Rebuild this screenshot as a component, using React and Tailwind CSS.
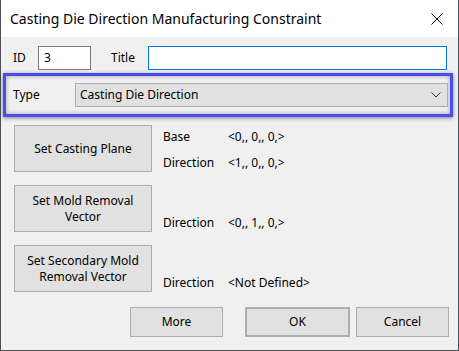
import React from 'react';

const font = { fontFamily: '"Noto Sans", "Open Sans", sans-serif' };

const WinButton = ({ className = '', children }) => (
    <button
        className={`flex items-center justify-center text-center bg-[#e1e1e1] border border-[#adadad] text-[12px] leading-[16px] text-black ${className}`}
    >
        {children}
    </button>
);

const ActionGroup = ({ label, rows }) => (
    <div className="flex h-[47px]">
        <WinButton className="w-[138px] h-[47px] shrink-0">{label}</WinButton>
        <div className="ml-[11px] pt-[4px] flex flex-col gap-[10px] text-[12px] leading-[16px]">
            {rows.map(([name, value], i) => (
                <div key={i} className="flex h-[16px]">
                    <span className="w-[65px]">{name}</span>
                    <span>{value}</span>
                </div>
            ))}
        </div>
    </div>
);

export default function App() {
    return (
        <div
            className="w-[459px] h-[351px] bg-[#f0f0f0] border-x border-b border-[#4b5058] flex flex-col text-black"
            style={font}
        >
            {/* Title bar */}
            <div className="h-[37px] bg-white flex items-center justify-between pl-[9px] pr-[15px] shrink-0">
                <span className="text-[14px] leading-[20px] text-black">
                    Casting Die Direction Manufacturing Constraint
                </span>
                <svg width="12" height="12" viewBox="0 0 12 12" className="block">
                    <path d="M0.5 0.5 L11.5 11.5 M11.5 0.5 L0.5 11.5" stroke="#000" strokeWidth="1" />
                </svg>
            </div>

            {/* ID / Title row */}
            <div className="flex items-center h-[24px] mt-[9px] pl-[12px] pr-[11px] text-[12px]">
                <span className="w-[25px]">ID</span>
                <div className="w-[53px] h-[24px] bg-white border border-[#7a7a7a] px-[5px] flex items-center">
                    3
                </div>
                <span className="ml-[20px] w-[37px]">Title</span>
                <div className="flex-1 h-[24px] bg-white border border-[#0078d7]" />
            </div>

            {/* Type row (highlighted) */}
            <div className="mt-[3px] ml-[2px] w-[450px] h-[44px] border-[3px] border-[#4a4df2] shadow-[0_1px_4px_rgba(0,0,0,0.45),inset_0_0_4px_rgba(0,0,0,0.35)] flex items-center pl-[7px] pr-[2px] text-[12px]">
                <span className="w-[62px]">Type</span>
                <div className="flex-1 h-[24px] bg-[#e1e1e1] border border-[#adadad] flex items-center justify-between pl-[4px] pr-[6px]">
                    <span>Casting Die Direction</span>
                    <svg width="10" height="6" viewBox="0 0 10 6" className="block">
                        <path d="M0.5 0.5 L5 5 L9.5 0.5" fill="none" stroke="#333" strokeWidth="1" />
                    </svg>
                </div>
            </div>

            {/* Action groups */}
            <div className="mt-[8px] ml-[13px] flex flex-col gap-[13px]">
                <ActionGroup
                    label="Set Casting Plane"
                    rows={[
                        ['Base', '<0,, 0,, 0,>'],
                        ['Direction', '<1,, 0,, 0,>'],
                    ]}
                />
                <ActionGroup
                    label={<span>Set Mold Removal<br />Vector</span>}
                    rows={[
                        ['', ''],
                        ['Direction', '<0,, 1,, 0,>'],
                    ]}
                />
                <ActionGroup
                    label={<span>Set Secondary Mold<br />Removal Vector</span>}
                    rows={[
                        ['', ''],
                        ['Direction', '<Not Defined>'],
                    ]}
                />
            </div>

            {/* Bottom buttons */}
            <div className="mt-[15px] flex pl-[129px]">
                <WinButton className="w-[93px] h-[30px]">More</WinButton>
                <WinButton className="ml-[22px] w-[105px] h-[30px] border-2 border-[#0078d7]">OK</WinButton>
                <WinButton className="ml-[6px] w-[93px] h-[30px]">Cancel</WinButton>
            </div>
        </div>
    );
}
